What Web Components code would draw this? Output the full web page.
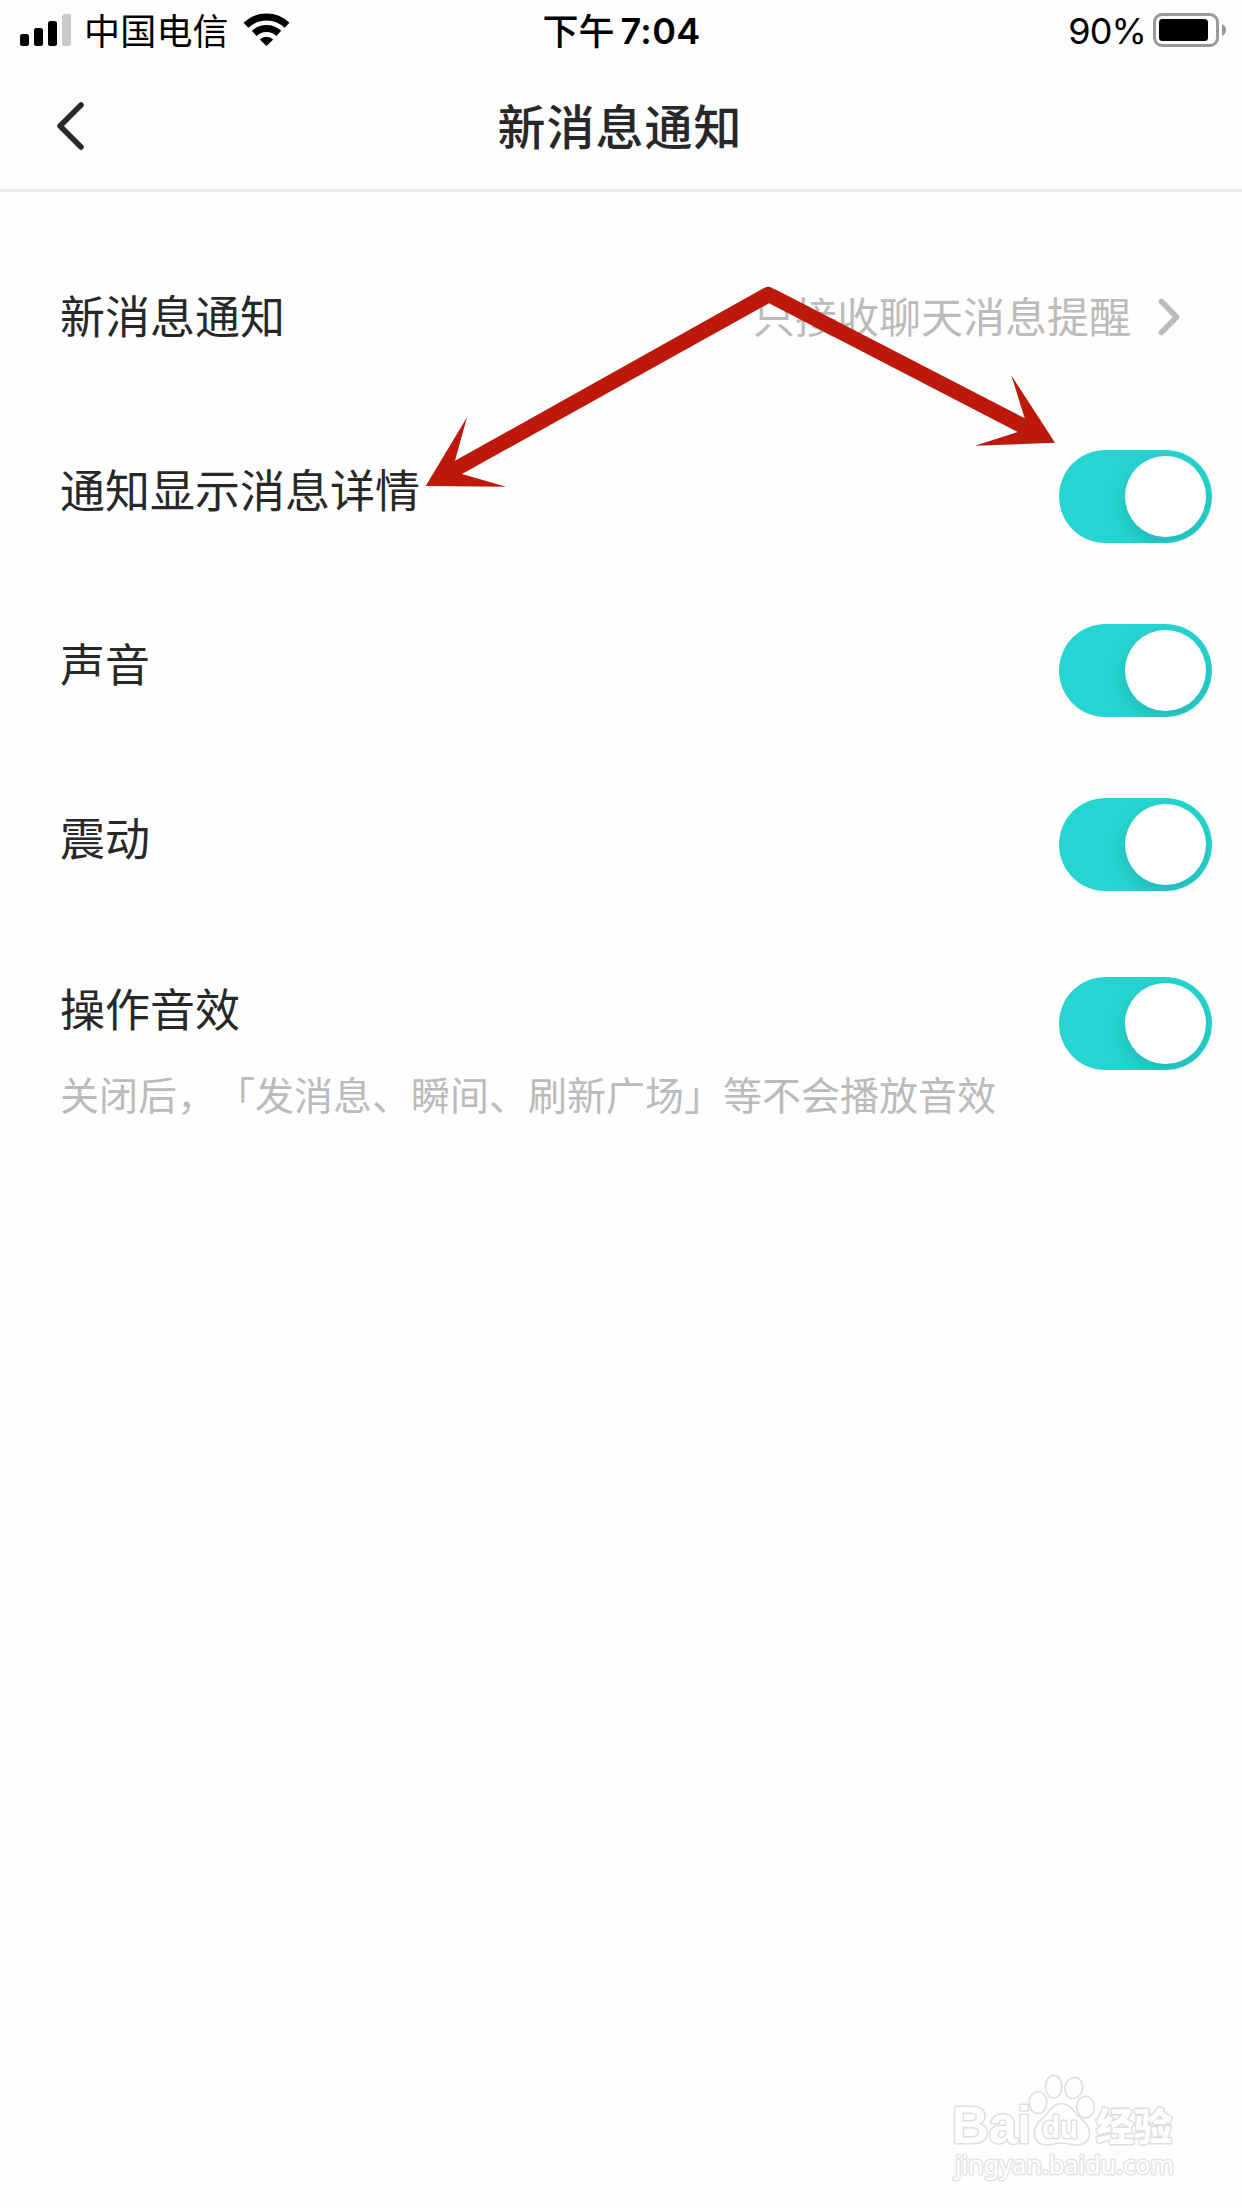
<!DOCTYPE html>
<html lang="zh-CN">
<head>
<meta charset="UTF-8">
<title>新消息通知</title>
<style>
    :root
    {
        --dark: #282828;
        --grey: #bbbbbb;
        --line: #ececec;
        --accent: #26d5d2;
        --arrow: #bd190a;
    }

    body
    {
        margin: 0;
        background-color: #fefefe;
        color: var(--dark);
        font-family: "Noto Sans CJK SC", sans-serif;
    }
</style>
</head>
<body>
<phone-screen>
    <status-bar slot="top" carrier="中国电信" period="下午" time="7:04" battery="90%"></status-bar>
    <nav-header slot="top">新消息通知</nav-header>

    <setting-row>新消息通知<detail-link slot="action">只接收聊天消息提醒</detail-link></setting-row>
    <setting-row>通知显示消息详情<toggle-switch slot="action"></toggle-switch></setting-row>
    <setting-row>声音<toggle-switch slot="action"></toggle-switch></setting-row>
    <setting-row>震动<toggle-switch slot="action"></toggle-switch></setting-row>
    <setting-row class="tall">操作音效<span slot="note">关闭后，「发消息、瞬间、刷新广场」等不会播放音效</span><toggle-switch slot="action"></toggle-switch></setting-row>

    <double-arrow slot="overlay"></double-arrow>
    <site-mark slot="overlay"></site-mark>
</phone-screen>

<script>
// Attach an open shadow root filled with the given markup
function render(element, html) {
    const template = document.createElement('template');
    template.innerHTML = html;
    element.attachShadow({ mode: 'open' }).appendChild(template.content);
}


// PAGE
class PhoneScreen extends HTMLElement {
    connectedCallback() {
        render(this, `
        <style>
        :host
        {
            display: flex;
            flex-direction: column;
            position: relative;
            width: 1242px;
            height: 2208px;
            overflow: hidden;
        }

        main
        {
            display: flex;
            flex-direction: column;
            padding-top: 37px;
        }
        </style>

        <slot name="top"></slot>
        <main><slot></slot></main>
        <slot name="overlay"></slot>
        `);
    }
}


// STATUS BAR
class StatusBar extends HTMLElement {
    connectedCallback() {
        render(this, `
        <style>
        :host
        {
            display: grid;
            grid-template-columns: 1fr auto 1fr;
            align-items: center;
            height: 60px;
            padding: 0 16px 0 20px;
            box-sizing: border-box;
            background-color: #fdfdfd;
            color: #000;
            font-size: 36px;
            line-height: 58px;
            white-space: nowrap;
        }

        div
        {
            display: flex;
            align-items: center;
            height: 60px;
        }

        svg
        {
            display: block;
            flex: none;
        }

        .carrier
        {
            margin-left: 13px;
            margin-right: 14px;
            padding-bottom: 2px;
            letter-spacing: 0.2px;
        }

        .clock
        {
            font-weight: 500;
            padding-right: 3px;
        }

        .period
        {
            padding-bottom: 2px;
        }

        .digits
        {
            font-family: Inter, sans-serif;
            font-weight: 600;
            margin-left: 6px;
            padding-top: 2px;
            letter-spacing: 0.3px;
        }

        .right
        {
            justify-content: flex-end;
        }

        .level
        {
            font-family: Inter, sans-serif;
            margin-right: 7px;
            padding-top: 2px;
            letter-spacing: -0.9px;
        }
        </style>

        <div>
            <svg width="51" height="60" viewBox="0 0 51 60">
                <rect x="0" y="34" width="9" height="12" rx="2.5"/>
                <rect x="14" y="28" width="9" height="18" rx="2.5"/>
                <rect x="28" y="21" width="9" height="25" rx="2.5"/>
                <rect x="42" y="14" width="9" height="32" rx="2.5" fill="#cacaca"/>
            </svg>
            <span class="carrier">${this.getAttribute('carrier')}</span>
            <svg width="47" height="60" viewBox="0 0 47 60">
                <g fill="none" stroke="#000" stroke-width="7">
                    <path d="M3 25.3 A29.5 29.5 0 0 1 44 25.3"/>
                    <path d="M11.2 33.4 A18 18 0 0 1 35.8 33.4"/>
                </g>
                <path d="M16.8 39.4 A9.6 9.6 0 0 1 30.2 39.4 L23.5 46 Z"/>
            </svg>
        </div>
        <div class="clock"><span class="period">${this.getAttribute('period')}</span><span class="digits">${this.getAttribute('time')}</span></div>
        <div class="right">
            <span class="level">${this.getAttribute('battery')}</span>
            <svg width="73" height="60" viewBox="0 0 73 60">
                <rect x="1.5" y="14.5" width="63" height="31" rx="7.5" fill="none" stroke="#999" stroke-width="3"/>
                <rect x="6" y="19" width="49" height="22" rx="3.5"/>
                <path d="M69 24 Q73 26 73 30 Q73 34 69 36 Z" fill="#999"/>
            </svg>
        </div>
        `);
    }
}


// NAVIGATION HEADER
class NavHeader extends HTMLElement {
    connectedCallback() {
        render(this, `
        <style>
        :host
        {
            display: grid;
            grid-template-columns: 1fr auto 1fr;
            align-items: center;
            height: 132px;
            padding-left: 54px;
            padding-right: 56px;
            box-sizing: border-box;
            border-bottom: 3px solid var(--line);
            background-color: #fdfdfd;
        }

        svg
        {
            display: block;
            margin-top: 3px;
        }

        h1
        {
            margin: 0;
            font-size: 48px;
            font-weight: 500;
            line-height: 129px;
            letter-spacing: 1px;
        }
        </style>

        <svg width="34" height="54" viewBox="0 0 34 54">
            <path d="M27 6 L6 27 L27 48" fill="none" stroke="#282828" stroke-width="5.5" stroke-linecap="round" stroke-linejoin="round"/>
        </svg>
        <h1><slot></slot></h1>
        `);
    }
}


// SETTING ROW
class SettingRow extends HTMLElement {
    connectedCallback() {
        render(this, `
        <style>
        :host
        {
            display: flex;
            justify-content: space-between;
            align-items: center;
            height: 174px;
            padding-left: 60px;
            padding-right: 30px;
            box-sizing: border-box;
            font-size: 45px;
            line-height: 66px;
            text-spacing-trim: space-all;
        }

        :host(.tall)
        {
            height: 229px;
            margin-top: 2px;
        }

        .text
        {
            display: flex;
            flex-direction: column;
            padding-bottom: 2px;
        }

        ::slotted([slot="note"])
        {
            margin-top: 23px;
            color: var(--grey);
            font-size: 39px;
            line-height: 58px;
        }

        .action
        {
            padding-top: 13px;
        }

        :host(.tall) .action
        {
            padding-top: 0;
            padding-bottom: 36px;
        }

        :host(.tall) .text
        {
            padding-bottom: 0;
            padding-top: 14px;
        }
        </style>

        <div class="text"><div><slot></slot></div><slot name="note"></slot></div>
        <div class="action"><slot name="action"></slot></div>
        `);
    }
}


// VALUE WITH CHEVRON
class DetailLink extends HTMLElement {
    connectedCallback() {
        render(this, `
        <style>
        :host
        {
            display: flex;
            align-items: center;
            gap: 27px;
            margin-top: -11px;
            padding-right: 30px;
            color: var(--grey);
            font-size: 42px;
            line-height: 60px;
        }

        span
        {
            padding-bottom: 4px;
        }

        svg
        {
            display: block;
        }
        </style>

        <span><slot></slot></span>
        <svg width="24" height="42" viewBox="0 0 24 42">
            <path d="M3.5 5.5 L18.5 21 L3.5 36.5" fill="none" stroke="#bbb" stroke-width="5.5" stroke-linecap="round" stroke-linejoin="round"/>
        </svg>
        `);
    }
}


// TOGGLE SWITCH
class ToggleSwitch extends HTMLElement {
    connectedCallback() {
        render(this, `
        <style>
        :host
        {
            display: flex;
            justify-content: flex-end;
            width: 153px;
            height: 93px;
            padding: 6px;
            box-sizing: border-box;
            border-radius: 47px;
            background-color: var(--accent);
            overflow: hidden;
        }

        .knob
        {
            width: 81px;
            height: 81px;
            border-radius: 50%;
            background-color: #fff;
            box-shadow: 0 8px 20px rgba(0, 0, 0, 0.14);
        }
        </style>

        <div class="knob"></div>
        `);
    }
}


// ARROWS OVER THE LIST
class DoubleArrow extends HTMLElement {
    connectedCallback() {
        render(this, `
        <style>
        :host
        {
            display: block;
            position: absolute;
            left: 420px;
            top: 280px;
        }

        svg
        {
            display: block;
            fill: var(--arrow);
        }
        </style>

        <svg width="640" height="212" viewBox="420 280 640 212">
            <path d="M763.5 288.3 Q768.5 285 773.5 288.8 L778 290.8 L1024.7 418.3 L1011.3 375.3 L1055 442.7 L975 445.8 L1017.7 432 L769 303.3 L462 474 L506 486.8 L425.7 486 L467 417.3 L455 460.8 Z"/>
        </svg>
        `);
    }
}


// WATERMARK
class SiteMark extends HTMLElement {
    connectedCallback() {
        render(this, `
        <style>
        :host
        {
            display: block;
            position: absolute;
            left: 940px;
            top: 2060px;
        }

        svg
        {
            display: block;
            fill: #fefefe;
            stroke: #dedede;
            stroke-width: 1.6;
            stroke-linejoin: round;
        }

        text
        {
            font-family: "Liberation Sans", sans-serif;
            font-weight: bold;
            paint-order: stroke;
            stroke-width: 3;
        }

        .cjk
        {
            font-family: "Noto Sans CJK SC", sans-serif;
            font-weight: 900;
        }

        .url
        {
            font-family: "Noto Sans", sans-serif;
            font-weight: 400;
            stroke: #e4e4e4;
        }
        </style>

        <svg width="250" height="130" viewBox="940 2060 250 130">
            <text x="952" y="2143" font-size="51" textLength="79" lengthAdjust="spacingAndGlyphs">Bai</text>
            <ellipse cx="1038" cy="2102.5" rx="9" ry="11"/>
            <ellipse cx="1053.7" cy="2086.7" rx="8.2" ry="11.5"/>
            <ellipse cx="1073.7" cy="2088" rx="8.8" ry="10.6" transform="rotate(12 1073.7 2088)"/>
            <ellipse cx="1085.5" cy="2107" rx="8.8" ry="10.8"/>
            <path d="M1061.5 2103.5 C1070 2103.5 1073 2110 1077 2115 C1082 2120 1089 2124 1089.5 2132 C1090 2141 1084 2145 1077 2145 C1071 2145 1067 2143 1061.5 2143 C1056 2143 1052 2145 1047 2145 C1039 2145 1034 2140 1034.5 2132 C1035 2124 1041 2120 1046 2115 C1050 2110 1053 2103.5 1061.5 2103.5 Z"/>
            <text x="1042" y="2138" font-size="31" textLength="36" lengthAdjust="spacingAndGlyphs">du</text>
            <text class="cjk" x="1096" y="2140" font-size="38">经验</text>
            <text class="url" x="955" y="2174" font-size="25" textLength="219" lengthAdjust="spacingAndGlyphs">jingyan.baidu.com</text>
        </svg>
        `);
    }
}

customElements.define('phone-screen', PhoneScreen);
customElements.define('status-bar', StatusBar);
customElements.define('nav-header', NavHeader);
customElements.define('setting-row', SettingRow);
customElements.define('detail-link', DetailLink);
customElements.define('toggle-switch', ToggleSwitch);
customElements.define('double-arrow', DoubleArrow);
customElements.define('site-mark', SiteMark);
</script>
</body>
</html>
